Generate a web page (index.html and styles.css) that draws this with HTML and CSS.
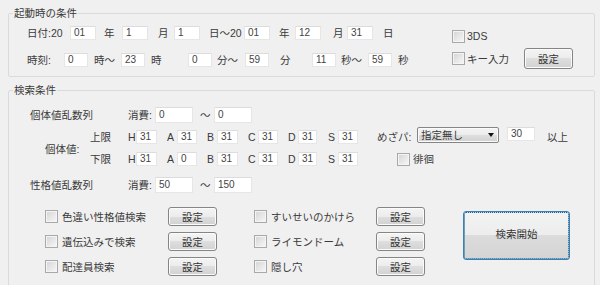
FILE: index.html
```html
<!DOCTYPE html>
<html lang="ja">
<head>
<meta charset="utf-8">
<title>条件</title>
<link rel="stylesheet" href="styles.css">
</head>
<body>
<fieldset class="group g1">
  <legend>起動時の条件</legend>
  <div class="g1-body">
    <div class="g1-left">
      <div class="row r14">
        <span class="lbl w43">日付:20</span>
        <span class="tb w26">01</span>
        <span class="lbl w26 pl8">年</span>
        <span class="tb w26">1</span>
        <span class="lbl w26 pl10">月</span>
        <span class="tb w26">1</span>
        <span class="lbl w44 pl9">日～20</span>
        <span class="tb w26">01</span>
        <span class="lbl w25 pl9">年</span>
        <span class="tb w26">12</span>
        <span class="lbl w26 pl12">月</span>
        <span class="tb w26">31</span>
        <span class="lbl pl10">日</span>
      </div>
      <div class="row r14 second">
        <span class="lbl w37">時刻:</span>
        <span class="tb w24">0</span>
        <span class="lbl w33 pl6">時～</span>
        <span class="tb w24">23</span>
        <span class="lbl w43 pl6">時</span>
        <span class="tb w24">0</span>
        <span class="lbl w33 pl5">分～</span>
        <span class="tb w24">59</span>
        <span class="lbl w43 pl11">分</span>
        <span class="tb w24">11</span>
        <span class="lbl w32 pl5">秒～</span>
        <span class="tb w24">59</span>
        <span class="lbl pl6">秒</span>
      </div>
    </div>
    <div class="g1-right">
      <div class="row opt-a">
        <span class="cb"></span><span class="lbl ml2">3DS</span>
      </div>
      <div class="row opt-b">
        <span class="check-cell"><span class="cb"></span><span class="lbl ml2">キー入力</span></span>
        <span class="btn big">設定</span>
      </div>
    </div>
  </div>
</fieldset>

<fieldset class="group g2">
  <legend>検索条件</legend>
  <div class="row seq first-seq">
    <span class="lbl w119 pl21">個体値乱数列</span>
    <span class="lbl w27">消費:</span>
    <span class="tb w38 h16">0</span>
    <span class="lbl w21 pl7">～</span>
    <span class="tb w38 h16">0</span>
  </div>

  <div class="iv">
    <span class="lbl iv-title">個体値:</span>
    <div class="iv-rows">
      <div class="row iv-row">
        <span class="lbl w38">上限</span>
        <span class="lbl w8">H</span><span class="tb w21">31</span>
        <span class="lbl w20 pl10">A</span><span class="tb w20">31</span>
        <span class="lbl w20 pl10">B</span><span class="tb w21">31</span>
        <span class="lbl w20 pl10">C</span><span class="tb w20">31</span>
        <span class="lbl w20 pl10">D</span><span class="tb w19">31</span>
        <span class="lbl w21 pl11">S</span><span class="tb w20">31</span>
        <span class="lbl w59 pl19">めざパ:</span>
        <span class="select"><span>指定無し</span><span class="arrow"></span></span>
        <span class="tb w28 ml8 top">30</span>
        <span class="lbl pl12">以上</span>
      </div>
      <div class="row iv-row">
        <span class="lbl w38">下限</span>
        <span class="lbl w8">H</span><span class="tb w21">31</span>
        <span class="lbl w20 pl10">A</span><span class="tb w20">0</span>
        <span class="lbl w20 pl10">B</span><span class="tb w21">31</span>
        <span class="lbl w20 pl10">C</span><span class="tb w20">31</span>
        <span class="lbl w20 pl10">D</span><span class="tb w19">31</span>
        <span class="lbl w21 pl11">S</span><span class="tb w20">31</span>
        <span class="cb ml39"></span><span class="lbl ml3">徘徊</span>
      </div>
    </div>
  </div>

  <div class="row seq second-seq">
    <span class="lbl w119 pl21">性格値乱数列</span>
    <span class="lbl w27">消費:</span>
    <span class="tb w38 h16">50</span>
    <span class="lbl w21 pl7">～</span>
    <span class="tb w38 h16">150</span>
  </div>

  <div class="flags">
    <div class="flag-grid">
      <span class="flag"><span class="cb"></span><span class="lbl ml4">色違い性格値検索</span></span>
      <span class="btn small">設定</span>
      <span class="flag col2"><span class="cb"></span><span class="lbl ml4">すいせいのかけら</span></span>
      <span class="btn small">設定</span>

      <span class="flag"><span class="cb"></span><span class="lbl ml4">遺伝込みで検索</span></span>
      <span class="btn small">設定</span>
      <span class="flag col2"><span class="cb"></span><span class="lbl ml4">ライモンドーム</span></span>
      <span class="btn small">設定</span>

      <span class="flag"><span class="cb"></span><span class="lbl ml4">配達員検索</span></span>
      <span class="btn small">設定</span>
      <span class="flag col2"><span class="cb"></span><span class="lbl ml4">隠し穴</span></span>
      <span class="btn small">設定</span>
    </div>
    <span class="btn search">検索開始</span>
  </div>
</fieldset>
</body>
</html>
```

FILE: styles.css
```css
* { box-sizing: border-box; }
html, body { margin: 0; padding: 0; }
body {
  width: 600px;
  height: 285px;
  overflow: hidden;
  background: #f0f0f0;
  font-family: "Liberation Sans", "Noto Sans CJK JP", sans-serif;
  font-size: 10.5px;
  line-height: 14px;
  color: #3a3a3a;
}

/* group boxes */
.group {
  margin: 0 5px 0 8px;
  padding: 0;
  min-width: 0;
  border: 1px solid #dadada;
  border-radius: 2px;
}
.group legend {
  margin-left: 4px;
  padding: 0 1px;
  line-height: 12px;
  height: 12px;
  color: #3a3a3a;
}
.g1 { margin-top: 7px; }
.g2 { margin-top: 7px; height: 215px; }

.g1-body { display: flex; height: 57px; }
.g1-left { flex: none; width: 443px; padding: 7px 0 0 18px; }
.g1-right { flex: none; padding-top: 7px; }

.row { display: flex; align-items: center; }
.r14 { height: 14px; }
.second { margin-top: 13px; }
.opt-a { height: 20px; }
.opt-b { height: 21px; margin-top: 2px; }
.check-cell { display: flex; align-items: center; width: 72px; }

/* labels */
.lbl { flex: none; display: block; height: 14px; line-height: 14px; white-space: nowrap; }
.w8 { width: 8px; } .w19 { width: 19px; } .w20 { width: 20px; } .w21 { width: 21px; }
.w24 { width: 24px; } .w25 { width: 25px; } .w26 { width: 26px; } .w27 { width: 27px; }
.w28 { width: 28px; } .w32 { width: 32px; } .w33 { width: 33px; } .w37 { width: 37px; }
.w38 { width: 38px; } .w43 { width: 43px; } .w44 { width: 44px; } .w59 { width: 59px; }
.w119 { width: 119px; }
.pl5 { padding-left: 5px; } .pl6 { padding-left: 6px; } .pl7 { padding-left: 7px; }
.pl8 { padding-left: 8px; } .pl9 { padding-left: 9px; } .pl10 { padding-left: 10px; }
.pl11 { padding-left: 11px; } .pl12 { padding-left: 12px; } .pl19 { padding-left: 19px; }
.pl21 { padding-left: 21px; }
.ml2 { margin-left: 2px; } .ml3 { margin-left: 3px; } .ml4 { margin-left: 4px; }
.ml8 { margin-left: 8px; } .ml39 { margin-left: 39px; }

/* text boxes */
.tb {
  flex: none;
  display: block;
  height: 14px;
  line-height: 12px;
  padding-left: 3px;
  background: #fff;
  border: 1px solid #e6e6e6;
  border-top-color: #dcdcdc;
  color: #444;
  font-size: 10px;
  white-space: nowrap;
}
.tb.h16 { height: 16px; line-height: 14px; }

/* checkbox */
.cb {
  flex: none;
  display: block;
  width: 13px;
  height: 13px;
  border: 1px solid #a9a9a9;
  background: linear-gradient(135deg, #d3d3d3 0%, #e8e8e8 55%, #f8f8f8 100%);
  box-shadow: inset 0 0 0 1px #f4f4f4;
}

/* buttons */
.btn {
  flex: none;
  display: flex;
  align-items: center;
  justify-content: center;
  border: 1px solid #858585;
  border-radius: 3px;
  background: linear-gradient(#f4f4f4 0%, #ececec 50%, #dedede 50%, #d2d2d2 100%);
  box-shadow: inset 0 0 0 1px #fbfbfb;
  color: #333;
  white-space: nowrap;
}
.btn.big { width: 49px; height: 21px; }
.btn.small { width: 49px; height: 19px; }
.btn.search {
  width: 107px;
  height: 49px;
  margin-left: 38px;
  margin-top: 4px;
  border-color: #3c7fb1;
  box-shadow: inset 0 0 0 1px #b8ddf3;
  background: linear-gradient(#f3f3f3 0%, #ededed 48%, #dcdcdc 48%, #d4d4d4 100%);
  outline: 1px dotted #2b5f86;
  outline-offset: -2px;
  padding-bottom: 3px;
}

/* group 2 rows */
.seq { height: 16px; }
.first-seq { margin-top: 11px; }
.second-seq { margin-top: 11px; }

.iv { display: flex; margin-top: 4px; height: 39px; }
.iv-title { width: 81px; padding-left: 36px; align-self: center; height: 19px; padding-top: 5px; }
.iv-rows { display: flex; flex-direction: column; gap: 5px; }
.iv-row { height: 17px; align-items: flex-end; }
.top { align-self: flex-start; }

.select {
  flex: none;
  align-self: flex-start;
  display: flex;
  align-items: center;
  justify-content: space-between;
  width: 82px;
  height: 16px;
  padding: 0 4px 0 3px;
  border: 1px solid #858585;
  border-radius: 2px;
  background: linear-gradient(#f4f4f4 0%, #ececec 50%, #dedede 50%, #d2d2d2 100%);
  box-shadow: inset 0 0 0 1px #fbfbfb;
  line-height: 14px;
  white-space: nowrap;
}
.arrow {
  width: 0;
  height: 0;
  border-left: 3.5px solid transparent;
  border-right: 3.5px solid transparent;
  border-top: 4px solid #111;
}

.flags { display: flex; align-items: flex-start; margin-top: 14px; padding-left: 36px; }
.flag-grid {
  display: grid;
  grid-template-columns: 123px 49px 159px 49px;
  grid-auto-rows: 19px;
  row-gap: 6px;
}
.flag { display: flex; align-items: center; }
.flag.col2 { padding-left: 37px; }
```
